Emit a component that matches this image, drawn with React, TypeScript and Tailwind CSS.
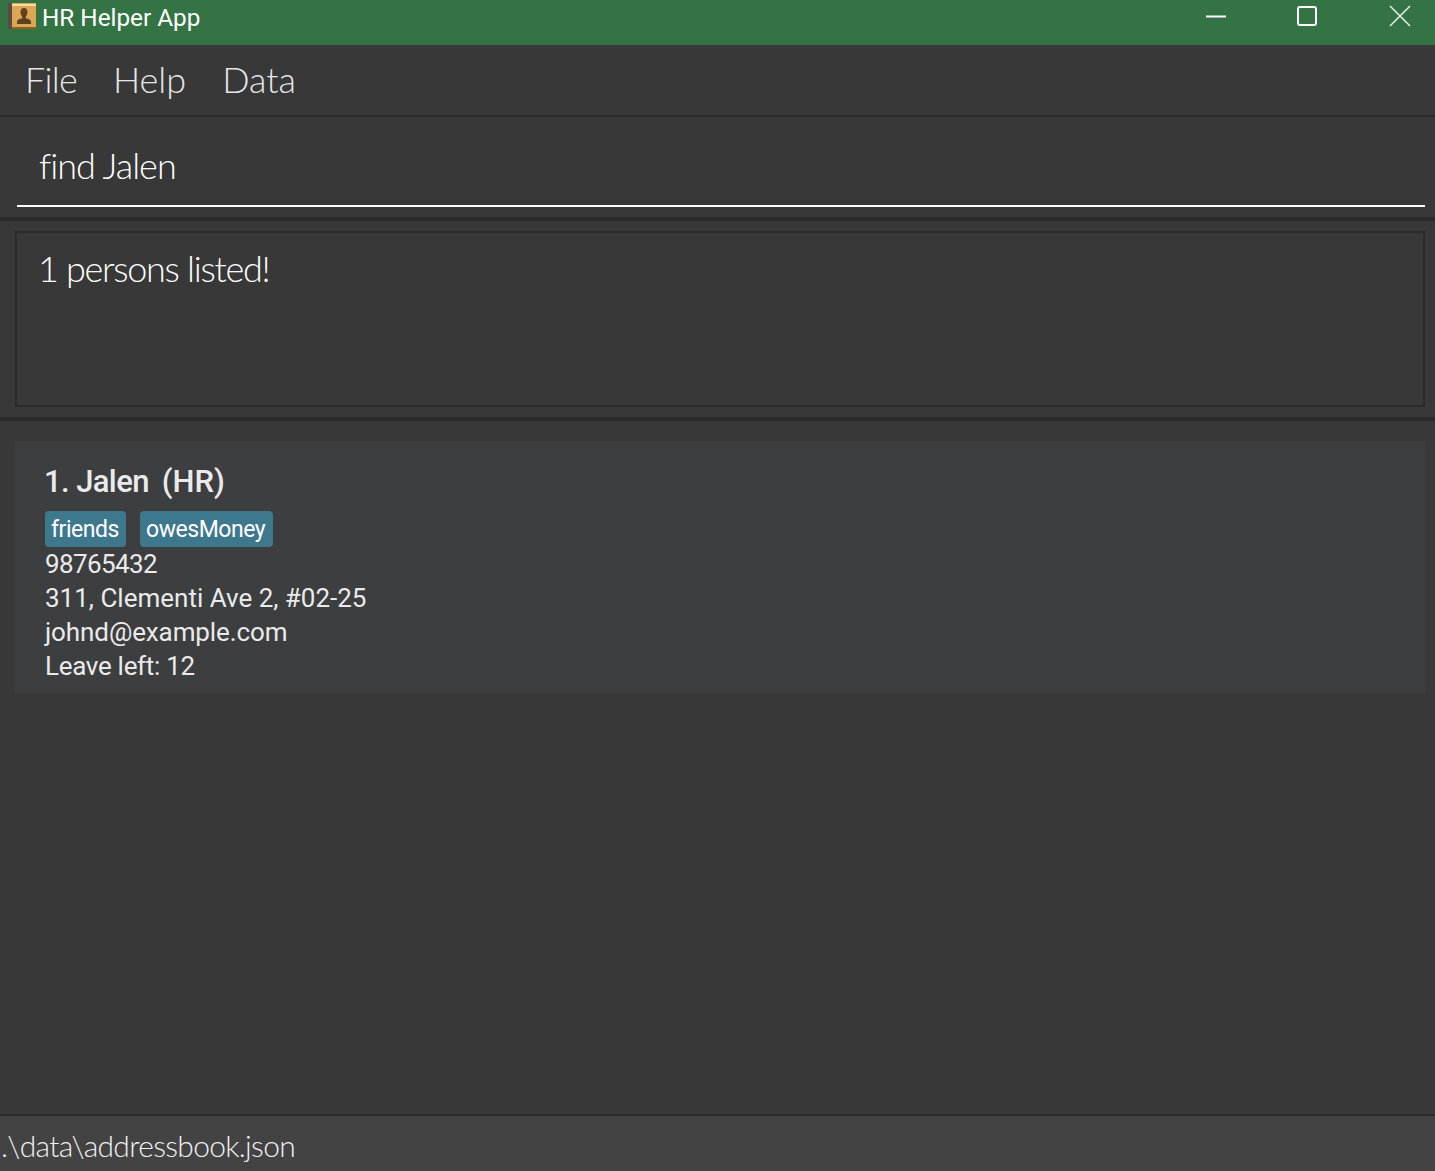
import React from "react";

function AppIcon() {
  return (
    <svg width="28" height="26" viewBox="0 0 28 26" className="block">
      <rect x="0" y="0" width="5" height="26" fill="#5a4a40" />
      <rect x="4" y="0" width="24" height="26" fill="#dca654" />
      <rect x="4" y="1" width="24" height="2" fill="#f3dca8" />
      <rect x="4" y="24" width="24" height="2" fill="#8a5f22" />
      <path d="M16 5c2.4 0 3.5 2 3.5 4s-1 4-1.7 4.8v1.4c2.5.8 5.2 1.6 5.2 3.3V21H9v-2.5c0-1.7 2.7-2.5 5.2-3.3v-1.4c-.7-.8-1.7-2.800-1.700-4.800S13.600 5 16 5z" fill="#5e4022" />
    </svg>
  );
}

export default function App() {
  return (
    <div className="flex h-[1171px] w-full flex-col overflow-hidden bg-[#383838] font-['Roboto',sans-serif]">
      <header className="flex h-[45px] shrink-0 items-start bg-[#347444] text-white">
        <div className="ml-[8px] mt-[3px]">
          <AppIcon />
        </div>
        <span className="ml-[6px] mt-[3px] text-[24.3px] leading-[30px]">HR Helper App</span>
        <div className="ml-auto flex items-start">
          <svg width="22" height="22" viewBox="0 0 22 22" className="mr-[69px] mt-[5px]" stroke="#fff" strokeWidth="2" fill="none">
            <path d="M1 11.500h20" />
          </svg>
          <svg width="22" height="22" viewBox="0 0 22 22" className="mr-[71px] mt-[5px]" stroke="#fff" strokeWidth="2" fill="none">
            <rect x="2" y="2" width="18" height="18" rx="2" />
          </svg>
          <svg width="22" height="22" viewBox="0 0 22 22" className="mr-[24px] mt-[5px]" stroke="#eef3ef" strokeWidth="1.500" fill="none">
            <path d="M1 1l20 20M21 1L1 21" />
          </svg>
        </div>
      </header>

      <nav className="flex h-[72px] shrink-0 items-center gap-[36px] border-b-2 border-[#2b2b2b] pb-[2px] pl-[25px] font-['Lato',sans-serif] text-[36px] font-light leading-[44px] text-[#e6e6e6]">
        <span className="tracking-[-0.75px]">File</span>
        <span>Help</span>
        <span>Data</span>
      </nav>

      <section className="h-[104px] shrink-0 border-b-4 border-[#2b2b2b] pl-[17px] pr-[10px]">
        <div className="flex h-[90px] items-center border-b-2 border-white pl-[22px] pt-[7px] font-['Lato',sans-serif] text-[36px] font-light leading-[44px] tracking-[-1px] text-white [font-variant-ligatures:none]">
          find Jalen
        </div>
      </section>

      <section className="h-[200px] shrink-0 border-b-4 border-[#2b2b2b] pl-[15px] pr-[10px] pt-[10px]">
        <div className="h-[176px] border-2 border-[#2b2b2b] pl-[21px] pt-[11px] font-['Lato',sans-serif] text-[36px] font-light leading-[48px] tracking-[-1.3px] text-white">
          1 persons listed!
        </div>
      </section>

      <main className="min-h-0 flex-1 pl-[15px] pr-[10px] pt-[20px]">
        <article className="flex h-[252px] flex-col bg-[#3c3e40] pl-[30px] pt-[22px] text-[26px] leading-[34px] text-[#eaeaea]">
          <h2 className="flex h-[38px] items-center gap-[13px] text-[31px] font-medium leading-[40px]">
            <span className="-ml-px tracking-[-0.6px]">1. Jalen</span>
            <span>(HR)</span>
          </h2>
          <div className="mt-[10px] flex gap-[14px]">
            <span className="flex h-[36px] items-center rounded-[4px] bg-[#3e788d] pl-[6px] pr-[7px] pt-[2px] text-[23px] tracking-[-0.45px] text-white">friends</span>
            <span className="flex h-[36px] items-center rounded-[4px] bg-[#3e788d] pl-[6px] pr-[8px] pt-[2px] text-[23px] tracking-[-0.45px] text-white">owesMoney</span>
          </div>
          <p className="tracking-[-0.6px]">98765432</p>
          <p>311, Clementi Ave 2, #02-25</p>
          <p className="tracking-[-0.1px]">johnd@example.com</p>
          <p className="tracking-[-0.3px]">Leave left: 12</p>
        </article>
      </main>

      <footer className="flex h-[57px] shrink-0 items-center border-t-2 border-[#2b2b2b] bg-[#434343] pl-[1px] pt-[3px] font-['Lato',sans-serif] text-[30px] font-light leading-[40px] tracking-[-0.7px] text-[#f0f0f0]">
        .\data\addressbook.json
      </footer>
    </div>
  );
}
